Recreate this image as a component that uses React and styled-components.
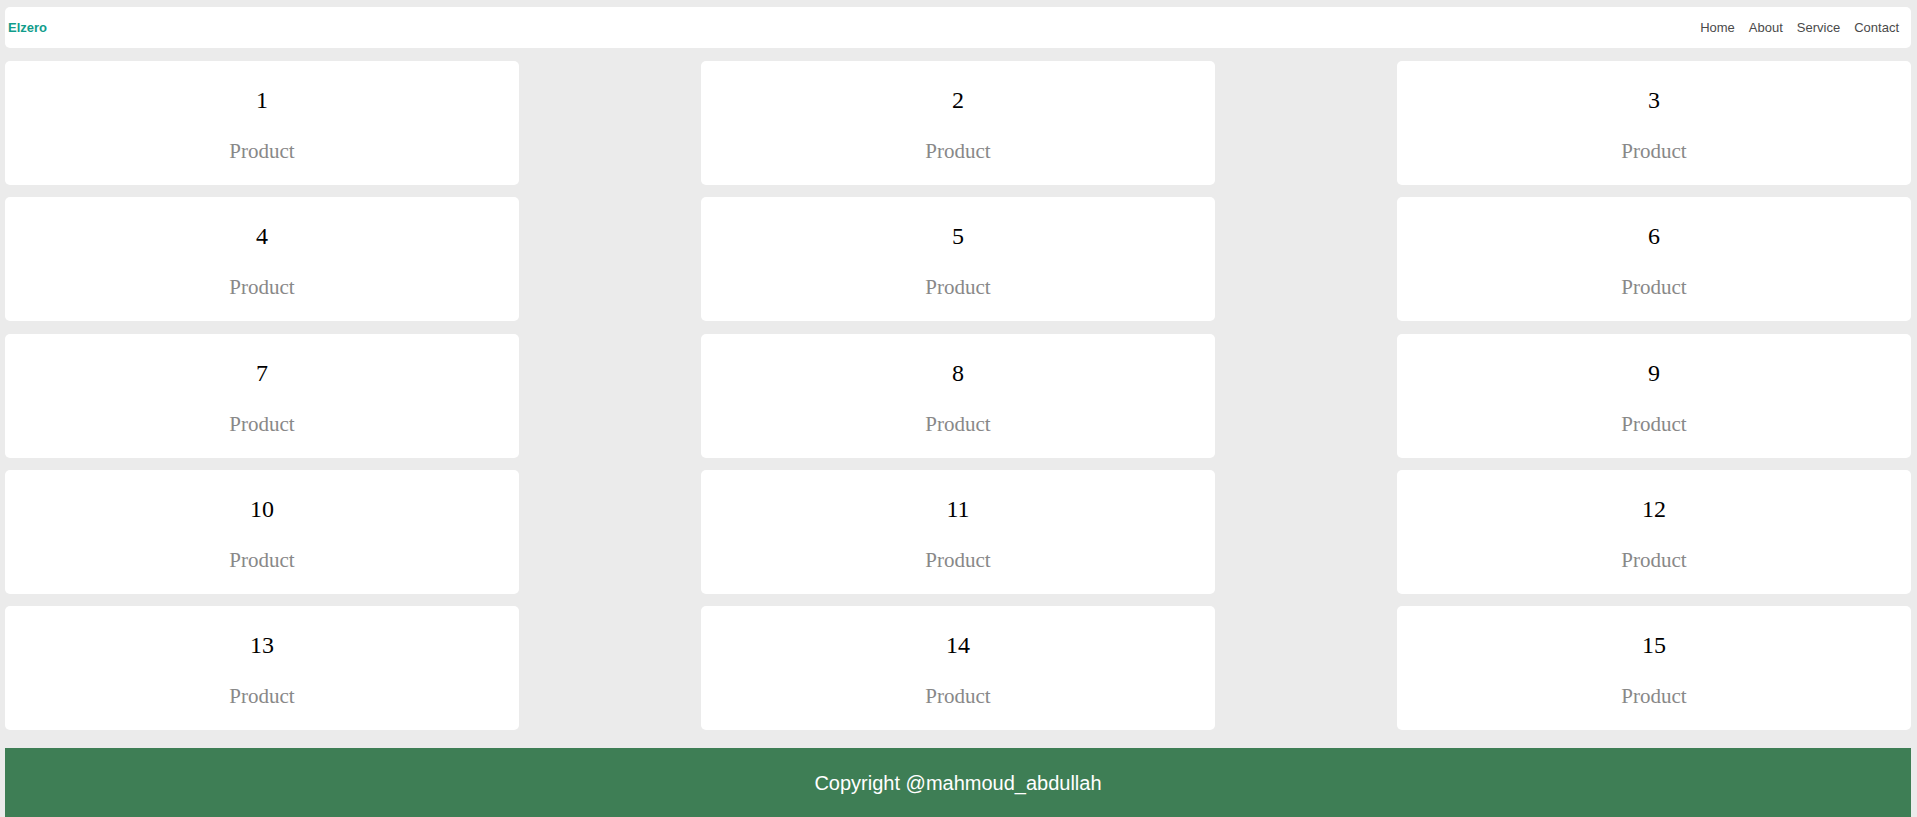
import React from 'react';
import styled, { createGlobalStyle } from 'styled-components';

const GlobalStyle = createGlobalStyle`
  * {
    box-sizing: border-box;
  }
  body {
    margin: 0;
    background-color: #ebebeb;
    font-family: "Liberation Sans", Arial, sans-serif;
  }
`;

const Page = styled.div`
  padding: 7px 6px 0 5px;
  display: flex;
  flex-direction: column;
`;

const Header = styled.header`
  display: flex;
  justify-content: space-between;
  align-items: center;
  height: 41px;
  padding: 0 12px 0 3px;
  background-color: white;
  border-radius: 5px;
`;

const Logo = styled.a`
  color: #119d8b;
  font-weight: bold;
  font-size: 13px;
  text-decoration: none;
`;

const Links = styled.nav`
  display: flex;
  gap: 14px;
`;

const NavLink = styled.a`
  color: #4a4a4a;
  font-size: 13px;
  text-decoration: none;
`;

const Grid = styled.main`
  display: grid;
  grid-template-columns: repeat(3, 514px);
  justify-content: space-between;
  row-gap: 12.25px;
  margin-top: 13px;
`;

const Card = styled.div`
  background-color: white;
  border-radius: 5px;
  height: 124px;
  padding-top: 24px;
  text-align: center;
  font-family: "Liberation Serif", "Times New Roman", serif;
`;

const Number = styled.div`
  font-size: 24px;
  line-height: 30px;
  color: black;
`;

const Label = styled.div`
  margin-top: 23px;
  font-size: 21px;
  line-height: 26px;
  color: #888;
`;

const Footer = styled.footer`
  margin-top: 18px;
  height: 70px;
  padding-top: 24px;
  background-color: #3e7e55;
  color: white;
  font-size: 20px;
  line-height: 23px;
  text-align: center;
`;

const products = Array.from({ length: 15 }, (_, i) => i + 1);

const App = () => {
  return (
    <Page>
      <GlobalStyle />
      <Header>
        <Logo href="#">Elzero</Logo>
        <Links>
          <NavLink href="#">Home</NavLink>
          <NavLink href="#">About</NavLink>
          <NavLink href="#">Service</NavLink>
          <NavLink href="#">Contact</NavLink>
        </Links>
      </Header>

      <Grid>
        {products.map((n) => (
          <Card key={n}>
            <Number>{n}</Number>
            <Label>Product</Label>
          </Card>
        ))}
      </Grid>

      <Footer>Copyright @mahmoud_abdullah</Footer>
    </Page>
  );
};

export default App;
